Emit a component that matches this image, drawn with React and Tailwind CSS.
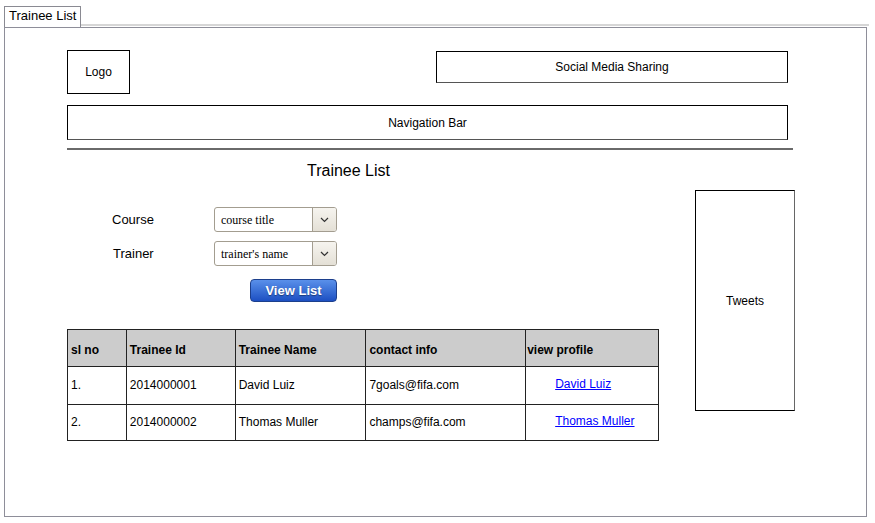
import React from "react";

const rows = [
  { no: "1.", id: "2014000001", name: "David Luiz", contact: "7goals@fifa.com" },
  { no: "2.", id: "2014000002", name: "Thomas Muller", contact: "champs@fifa.com" },
];

const sketch = "font-['Comic_Sans_MS','Liberation_Sans',sans-serif]";

const Select = ({ text }) => (
  <div className="flex w-[123px] h-[25px] border border-[#a39d90] rounded-[3px] bg-white overflow-hidden">
    <div className="flex-1 pl-[6px] text-[12px] leading-[24px] text-black font-['Liberation_Serif',serif]">{text}</div>
    <div className="w-[24px] border-l border-[#a39d90] bg-gradient-to-b from-[#f6f4ef] to-[#e4e0d6] flex items-center justify-center">
      <svg width="9" height="6" viewBox="0 0 9 6">
        <path d="M1 1 L4.5 4.5 L8 1" fill="none" stroke="#333" strokeWidth="1.2" />
      </svg>
    </div>
  </div>
);

export default function App() {
  return (
    <div className={`w-[875px] h-[523px] bg-white ${sketch} text-[12px] text-black`}>
      <div className="pt-[6px] pl-[4px]">
        {/* Tab */}
        <div className="flex h-[21px]">
          <div className="w-[77px] border border-b-0 border-[#8a8a92] pl-[4px] text-[13px] leading-[18px] font-['Liberation_Sans',sans-serif]">
            Trainee List
          </div>
          <div className="w-[788px] border-b-2 border-[#d6d6d6] mb-[1px]" />
        </div>

        {/* Panel */}
        <div className="w-[863px] h-[490px] border border-[#8e8e99] pl-[62px] pt-[22px]">
          <div className="flex items-start">
            <div className="w-[63px] h-[44px] border border-black flex items-center justify-center">Logo</div>
            <div className="ml-[306px] mt-[1px] w-[352px] h-[32px] border border-black border-b-[#555] flex items-center justify-center">
              Social Media Sharing
            </div>
          </div>
          <div className="mt-[11px] w-[721px] h-[35px] border border-black border-b-[#555] flex items-center justify-center">
            Navigation Bar
          </div>
          <div className="mt-[8px] w-[726px] h-[2px] bg-[#6a6a6a]" />

          <div className="flex items-start">
            <div className="w-[592px]">
              <div className="mt-[11px] ml-[240px] text-[16px] leading-[20px] font-['Liberation_Sans',sans-serif]">Trainee List</div>

              <div className="mt-[26px] flex items-center font-['Liberation_Sans',sans-serif] text-[13px]">
                <div className="w-[147px] pl-[45px]">Course</div>
                <Select text="course title" />
              </div>
              <div className="mt-[9px] flex items-center font-['Liberation_Sans',sans-serif] text-[13px]">
                <div className="w-[147px] pl-[46px]">Trainer</div>
                <Select text="trainer's name" />
              </div>
              <button className="mt-[13px] ml-[183px] w-[87px] h-[23px] rounded-[4px] border border-[#1c3f8c] bg-gradient-to-b from-[#5a90ea] to-[#1d4fc2] text-white font-bold text-[13px] leading-[20px] font-['Liberation_Sans',sans-serif] [text-shadow:0_1px_1px_rgba(0,0,0,0.4)]">
                View List
              </button>

              <table className="mt-[27px] border-collapse w-[592px]">
                <colgroup>
                  <col className="w-[59px]" />
                  <col className="w-[109px]" />
                  <col className="w-[131px]" />
                  <col className="w-[160px]" />
                  <col className="w-[133px]" />
                </colgroup>
                <thead>
                  <tr className="h-[37px] bg-[#cccccc]">
                    <th className="border border-[#222] text-left font-bold pl-[3px] pt-[3px]">sl no</th>
                    <th className="border border-[#222] text-left font-bold pl-[3px] pt-[3px]">Trainee Id</th>
                    <th className="border border-[#222] text-left font-bold pl-[3px] pt-[3px]">Trainee Name</th>
                    <th className="border border-[#222] text-left font-bold pl-[3px] pt-[3px]">contact info</th>
                    <th className="border border-[#222] text-left font-bold pl-[1px] pt-[3px]">view profile</th>
                  </tr>
                </thead>
                <tbody>
                  {rows.map((r, i) => (
                    <tr key={r.id} className={i === 0 ? "h-[38px]" : "h-[36px]"}>
                      <td className="border border-[#222] pl-[3px] pb-[2px]">{r.no}</td>
                      <td className="border border-[#222] pl-[3px] pb-[2px]">{r.id}</td>
                      <td className="border border-[#222] pl-[3px] pb-[2px]">{r.name}</td>
                      <td className="border border-[#222] pl-[3px] pb-[2px]">{r.contact}</td>
                      <td className="border border-[#222] pl-[29px] pb-[4px]">
                        <a className="text-[#0000ff] underline" href="#">{r.name}</a>
                      </td>
                    </tr>
                  ))}
                </tbody>
              </table>
            </div>

            <div className="ml-[36px] mt-[40px] w-[100px] h-[221px] border border-black border-r-[#666] flex items-center justify-center">
              Tweets
            </div>
          </div>
        </div>
      </div>
    </div>
  );
}
